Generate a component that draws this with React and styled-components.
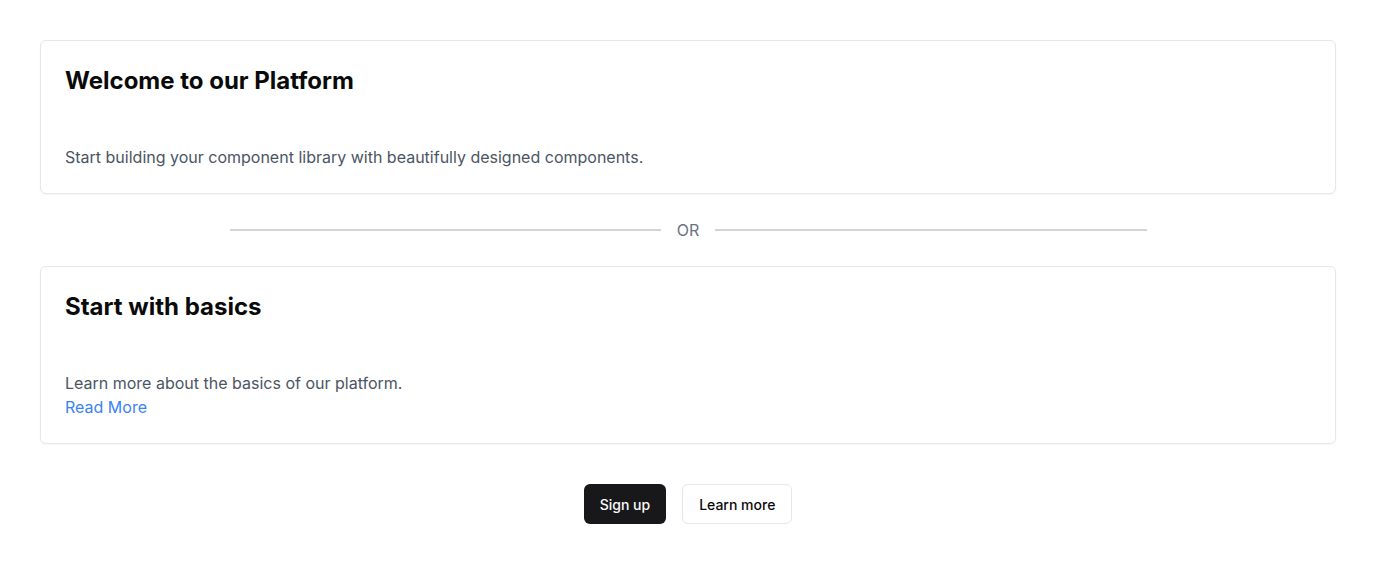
import React from "react";
import styled, { createGlobalStyle } from "styled-components";

const Global = createGlobalStyle`
  * { box-sizing: border-box; }
  html, body { margin: 0; padding: 0; background: #ffffff; }
  body { font-family: Inter, "Noto Sans", sans-serif; color: #0a0a0a; }
`;

const Page = styled.main`
  padding: 40px;
  display: flex;
  flex-direction: column;
  align-items: stretch;
`;

const Card = styled.section`
  border: 1px solid #e5e7eb;
  border-radius: 6px;
  background: #fff;
  box-shadow: 0 1px 2px rgba(0, 0, 0, 0.04);
  padding: 24px;
  display: flex;
  flex-direction: column;
`;

const Title = styled.h2`
  margin: 0 0 48px;
  font-size: 24px;
  line-height: 32px;
  font-weight: 700;
  color: #0a0a0a;
`;

const Text = styled.p`
  margin: 0;
  font-size: 16px;
  line-height: 24px;
  color: #4b5563;
`;

const Link = styled.a`
  font-size: 16px;
  line-height: 24px;
  color: #3b82f6;
  text-decoration: none;
`;

const Divider = styled.div`
  width: 917px;
  align-self: center;
  margin: 24px 0;
  display: flex;
  align-items: center;
  gap: 16px;
`;

const Line = styled.span`
  flex: 1;
  height: 2px;
  background: #d4d4d8;
`;

const DividerLabel = styled.span`
  font-size: 16px;
  line-height: 24px;
  color: #6b7280;
`;

const Actions = styled.div`
  margin-top: 40px;
  display: flex;
  justify-content: center;
  gap: 16px;
`;

const Button = styled.button`
  height: 40px;
  padding: 0 16px;
  border-radius: 6px;
  font-family: Inter, sans-serif;
  font-size: 14px;
  font-weight: 500;
  cursor: pointer;
  border: ${(p) => (p.$primary ? "none" : "1px solid #e5e7eb")};
  background: ${(p) => (p.$primary ? "#18181b" : "#ffffff")};
  color: ${(p) => (p.$primary ? "#fafafa" : "#0a0a0a")};
`;

export default function App() {
  return (
    <>
      <Global />
      <Page>
        <Card>
          <Title>Welcome to our Platform</Title>
          <Text>Start building your component library with beautifully designed components.</Text>
        </Card>
        <Divider>
          <Line />
          <DividerLabel>OR</DividerLabel>
          <Line />
        </Divider>
        <Card>
          <Title>Start with basics</Title>
          <Text>Learn more about the basics of our platform.</Text>
          <Link href="#">Read More</Link>
        </Card>
        <Actions>
          <Button $primary>Sign up</Button>
          <Button>Learn more</Button>
        </Actions>
      </Page>
    </>
  );
}
